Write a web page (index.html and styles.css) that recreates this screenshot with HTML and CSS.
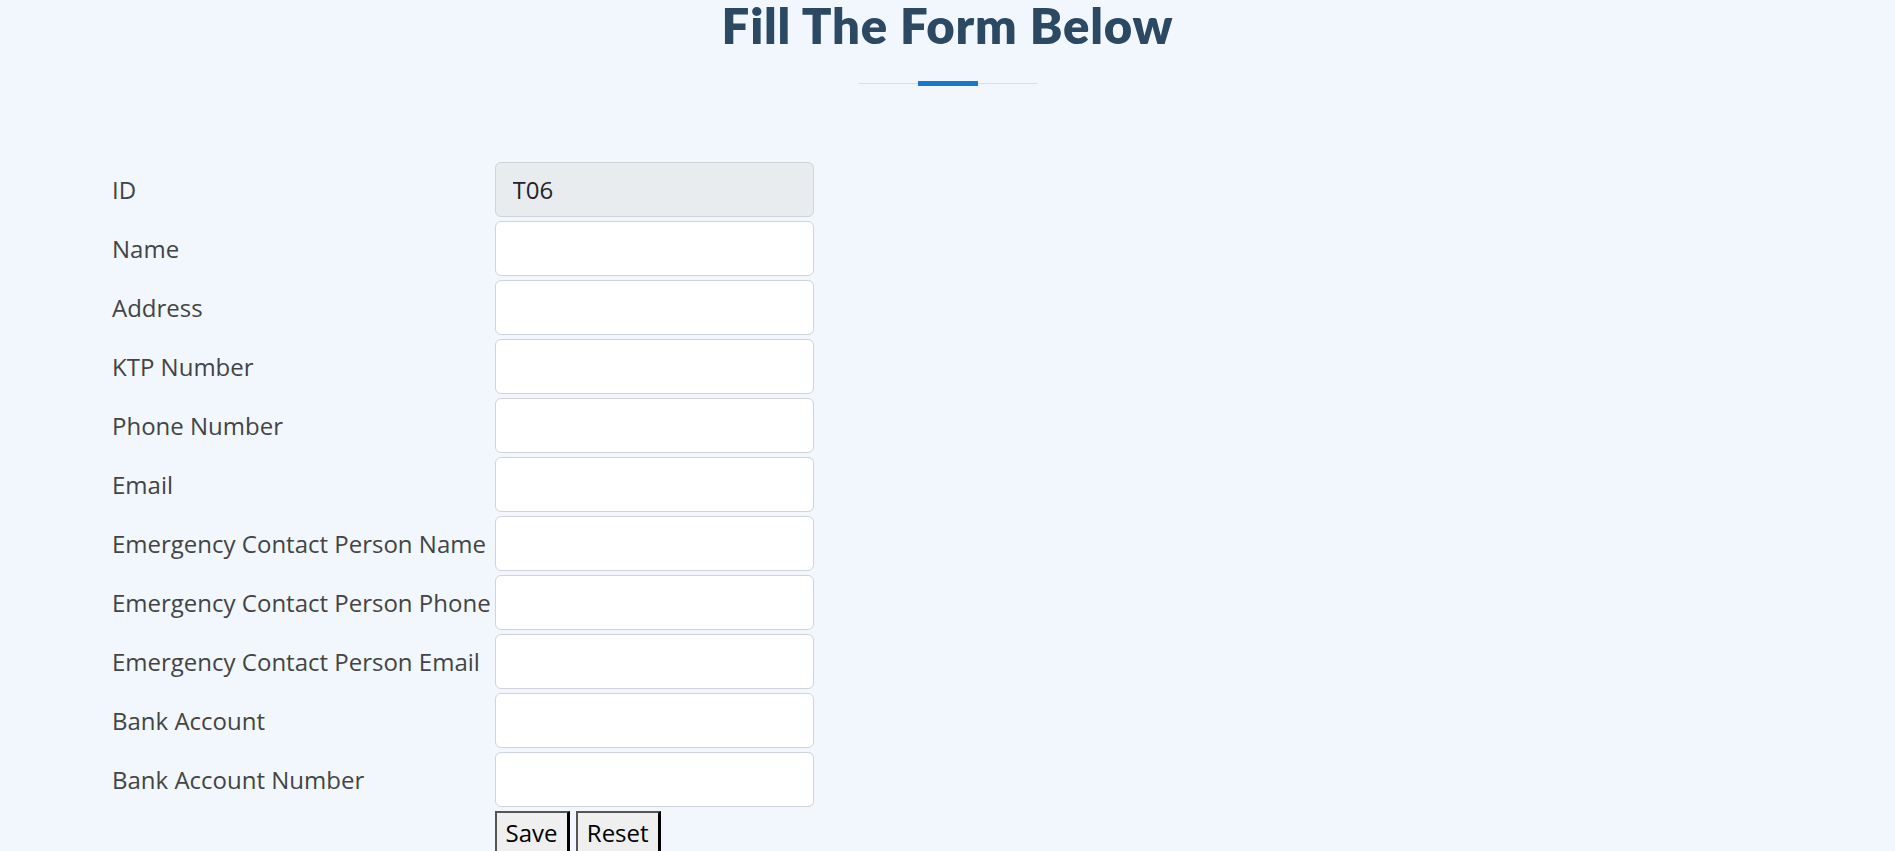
FILE: index.html
```html
<!DOCTYPE html>
<html lang="en">
<head>
<meta charset="utf-8">
<title>Fill The Form Below</title>
<link rel="stylesheet" href="styles.css">
</head>
<body>
<section class="page">
  <div class="section-title">
    <h2>Fill The Form Below</h2>
    <div class="title-rule"><span class="rule-bar"></span></div>
  </div>
  <form class="form-wrap">
    <table class="form-table">
      <tr><td class="lbl">ID</td><td><input class="field readonly" type="text" value="T06" readonly></td></tr>
      <tr><td class="lbl">Name</td><td><input class="field" type="text"></td></tr>
      <tr><td class="lbl">Address</td><td><input class="field" type="text"></td></tr>
      <tr><td class="lbl">KTP Number</td><td><input class="field" type="text"></td></tr>
      <tr><td class="lbl">Phone Number</td><td><input class="field" type="text"></td></tr>
      <tr><td class="lbl">Email</td><td><input class="field" type="text"></td></tr>
      <tr><td class="lbl">Emergency Contact Person Name</td><td><input class="field" type="text"></td></tr>
      <tr><td class="lbl">Emergency Contact Person Phone</td><td><input class="field" type="text"></td></tr>
      <tr><td class="lbl">Emergency Contact Person Email</td><td><input class="field" type="text"></td></tr>
      <tr><td class="lbl">Bank Account</td><td><input class="field" type="text"></td></tr>
      <tr><td class="lbl">Bank Account Number</td><td><input class="field" type="text"></td></tr>
      <tr><td></td><td class="actions"><button type="button" class="btn">Save</button> <button type="reset" class="btn">Reset</button></td></tr>
    </table>
  </form>
</section>
</body>
</html>
```
FILE: styles.css
```css
html, body {
  margin: 0;
  padding: 0;
  background: #f1f7fd;
}
body {
  font-family: "Open Sans", "Liberation Sans", sans-serif;
  color: #444444;
  font-size: 24px;
}
.page {
  min-height: 851px;
  overflow: hidden;
}
.section-title {
  text-align: center;
  padding-top: 1px;
}
.section-title h2 {
  margin: 0;
  font-family: "Lato", "Open Sans", sans-serif;
  font-weight: 800;
  font-size: 49px;
  line-height: 48px;
  color: #2c4964;
  letter-spacing: 0.8px;
}
.title-rule {
  width: 180px;
  height: 5px;
  margin: 32px auto 0;
  display: flex;
  justify-content: center;
  background: linear-gradient(#ddd, #ddd) 0 2px / 100% 1px no-repeat;
}
.rule-bar {
  width: 60px;
  height: 5px;
  background: #1977cc;
}
.form-wrap {
  padding: 73px 0 0 109px;
}
.form-table {
  border-spacing: 2px;
}
.form-table td {
  padding: 1px;
  vertical-align: middle;
}
.lbl {
  white-space: nowrap;
  color: #444444;
}
.field {
  display: block;
  box-sizing: border-box;
  width: 319px;
  height: 55px;
  margin: 0;
  padding: 0 17px;
  font-family: "Open Sans", sans-serif;
  font-size: 24px;
  color: #212529;
  background: #fff;
  border: 1px solid #ced4da;
  border-radius: 6px;
  outline: none;
}
.field.readonly {
  background: #e9ecef;
}
.actions {
  padding-top: 1px;
}
.btn {
  font-family: "Open Sans", sans-serif;
  font-size: 24px;
  color: #000;
  background: #efefef;
  padding: 4px 9px 2px;
  margin: 0;
  border-style: solid;
  border-width: 2px 3px 3px 2px;
  border-color: #555 #000 #000 #555;
  line-height: 1.362;
}
```
